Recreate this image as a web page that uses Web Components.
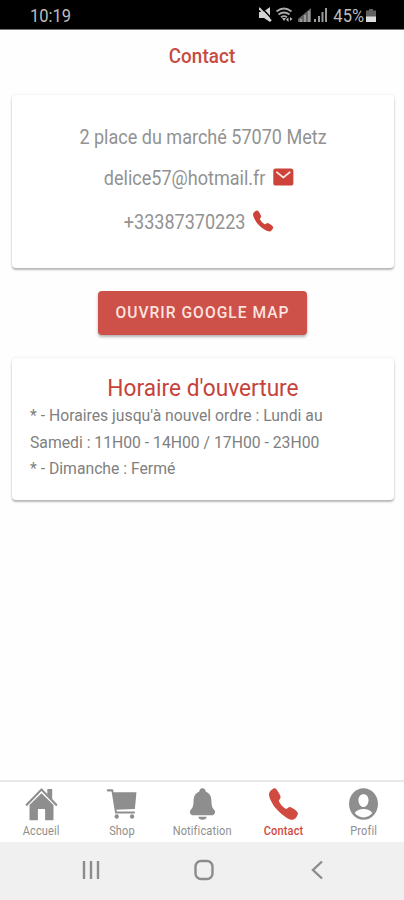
<!DOCTYPE html>
<html lang="fr">
<head>
<meta charset="utf-8">
<title>Contact</title>
<style>
    html, body {
        margin: 0;
        height: 100%;
        overflow: hidden;
        background: #fefefe;
    }
    body {
        font-family: Roboto, "Liberation Sans", sans-serif;
        color: #8e8e8e;
    }
</style>
</head>
<body>
<app-screen>
    <status-bar slot="top" time="10:19" battery="45%"></status-bar>
    <page-title slot="top">Contact</page-title>

    <info-card style="--height: 173px; --pad: 30px 18px 0">
        <contact-line>2 place du marché 57070 Metz</contact-line>
        <contact-line icon="mail" style="--gap-top: 16px">delice57@hotmail.fr</contact-line>
        <contact-line icon="call" style="--gap-top: 19px">+33387370223</contact-line>
    </info-card>

    <action-button>Ouvrir Google Map</action-button>

    <info-card style="--height: 142px; --pad: 16px 18px 0">
        <opening-hours heading="Horaire d'ouverture">
            <div>* - Horaires jusqu'à nouvel ordre : Lundi au</div>
            <div>Samedi : 11H00 - 14H00 / 17H00 - 23H00</div>
            <div>* - Dimanche : Fermé</div>
        </opening-hours>
    </info-card>

    <tab-bar slot="bottom">
        <tab-item icon="home">Accueil</tab-item>
        <tab-item icon="cart">Shop</tab-item>
        <tab-item icon="bell">Notification</tab-item>
        <tab-item icon="call" active>Contact</tab-item>
        <tab-item icon="person">Profil</tab-item>
    </tab-bar>
    <system-nav slot="bottom"></system-nav>
</app-screen>

<script>
    const icons = {
        mail: `<path fill="currentColor" d="M424 74H88a56 56 0 0 0-56 56v252a56 56 0 0 0 56 56h336a56 56 0 0 0 56-56V130a56 56 0 0 0-56-56z"/><path d="M112 156l144 112 144-112" fill="none" stroke="#fff" stroke-opacity=".85" stroke-width="38" stroke-linecap="round" stroke-linejoin="round"/>`,
        call: `<path fill="currentColor" d="M391 480c-19.52 0-46.94-7.06-88-30-49.93-28-88.55-53.85-138.21-103.38C116.91 298.77 93.61 267.79 61 208.45c-36.84-67-30.56-102.12-23.54-117.13C45.82 73.38 58.16 62.65 74.11 52a176.3 176.3 0 0128.64-15.2c1-.43 1.93-.84 2.76-1.21 4.95-2.23 12.45-5.6 21.95-2 6.34 2.38 12 7.25 20.86 16 18.17 17.92 43 57.83 52.16 77.43 6.15 13.21 10.22 21.93 10.23 31.71 0 11.45-5.76 20.28-12.75 29.81-1.31 1.79-2.61 3.5-3.87 5.16-7.61 10-9.28 12.89-8.18 18.05 2.23 10.37 18.86 41.24 46.19 68.51s57.31 42.85 67.72 45.07c5.38 1.15 8.33-.59 18.65-8.47 1.48-1.13 3-2.3 4.59-3.47 10.66-7.93 19.08-13.54 30.26-13.54h.06c9.73 0 18.06 4.22 31.86 11.18 18 9.08 59.11 33.59 77.14 51.78 8.77 8.84 13.66 14.48 16.05 20.8 3.6 9.53.21 17-2 22-.37.83-.78 1.74-1.21 2.75a176.49 176.49 0 01-15.29 28.58c-10.63 15.9-21.4 28.21-39.38 36.58A67.42 67.42 0 01391 480z"/>`,
        home: `<path fill="currentColor" d="M256 102L70 270v206a12 12 0 0 0 12 12h118V338a12 12 0 0 1 12-12h88a12 12 0 0 1 12 12v150h118a12 12 0 0 0 12-12V270z"/><path d="M26 268L256 50l230 218" fill="none" stroke="currentColor" stroke-width="31" stroke-linecap="round" stroke-linejoin="round"/><path fill="currentColor" d="M346 44h76v154l-76-72z"/>`,
        cart: `<g fill="currentColor"><circle cx="182" cy="434" r="33"/><circle cx="420" cy="434" r="33"/><path d="M118 88h370l-24 238-306 10z"/></g><path d="M42 62h72l56 316h282" fill="none" stroke="currentColor" stroke-width="29" stroke-linecap="round" stroke-linejoin="round"/>`,
        bell: `<path fill="currentColor" d="M440 341c-20-24-45-43-45-125 0-75-38-119-87-133-5-27-18-51-52-51s-47 24-52 51c-49 14-87 58-87 133 0 82-25 101-45 125-25 31-3 75 40 75h288c43 0 65-44 40-75zM190 438a67 51 0 0 0 132 0z"/>`,
        person: `<path fill="currentColor" fill-rule="evenodd" d="M256 32a224 224 0 1 0 0 448 224 224 0 1 0 0-448zM256 119c49 0 80 38 78 87-2 51-37 93-78 93s-76-42-78-93c-2-50 29-87 78-87zM256 447c-52 0-102-23-137-62 25-36 81-57 137-57s112 21 137 57c-35 39-85 62-137 62z"/>`
    };

    const icon = (name) => `<svg viewBox="0 0 512 512" preserveAspectRatio="none">${icons[name]}</svg>`;

    class BaseElement extends HTMLElement {
        constructor() {
            super();
            this.attachShadow({ mode: "open" });
        }

        connectedCallback() {
            this.shadowRoot.innerHTML = this.render();
        }
    }

    class AppScreen extends BaseElement {
        render() {
            return `
                <style>
                    :host {
                        display: flex;
                        flex-direction: column;
                        height: 100vh;
                        --condense: scaleX(0.918);
                    }
                    main {
                        flex: 1;
                        display: flex;
                        flex-direction: column;
                        padding: 14px 10px 0 12px;
                        gap: 23px;
                    }
                </style>
                <slot name="top"></slot>
                <main><slot></slot></main>
                <slot name="bottom"></slot>
            `;
        }
    }

    class StatusBar extends BaseElement {
        render() {
            return `
                <style>
                    :host {
                        display: flex;
                        align-items: center;
                        justify-content: space-between;
                        box-sizing: border-box;
                        height: 30px;
                        padding: 1px 28px 0 30px;
                        background: #000;
                        border-bottom: 1px solid #777;
                        color: #bdbdbd;
                        font-size: 18px;
                    }
                    span { transform: var(--condense); }
                    .time { transform-origin: 0 50%; }
                    .right { display: flex; align-items: center; }
                    svg { display: block; }
                    .battery { margin: 1px 0 0 1px; }
                </style>
                <span class="time">${this.getAttribute("time")}</span>
                <div class="right">
                    <svg width="73" height="18" viewBox="0 0 73 18">
                        <path fill="#d5d5d5" d="M0 6h4L11 1v15L5 12H0z"/>
                        <path d="M2 1l12 13" stroke="#000" stroke-width="1.500"/>
                        <path d="M0 2l12 13" stroke="#d5d5d5" stroke-width="2"/>
                        <g fill="none" stroke="#a9a9a9" stroke-width="1.800">
                            <path d="M17.500 5.500q7.500-6 15 0"/>
                            <path d="M19.500 8.500q5.500-4 11 0"/>
                            <path d="M22 11.200q3-2 6 0"/>
                        </g>
                        <path fill="#b9b9b9" d="M23 12h4l-2 3zM27 13.500l2.500-2v4.500zM31 11l2.500 2L31 15z"/>
                        <path fill="#666" d="M39 16v-3L52 2v14z"/>
                        <g fill="#999">
                            <path d="M41 13h2v3h-2zM45 9h2v7h-2zM49 5h2v11h-2z"/>
                            <path d="M55 13h2v3h-2zM59 10h2v6h-2zM62.500 6h2v10h-2zM66 2h2v14h-2z"/>
                        </g>
                    </svg>
                    <span>${this.getAttribute("battery")}</span>
                    <svg class="battery" width="10" height="14" viewBox="0 0 10 14">
                        <path fill="#606060" d="M3 0h4v1.500h3V8H0V1.500h3z"/>
                        <path fill="#ddd" d="M0 7.500h10V13H0z"/>
                    </svg>
                </div>
            `;
        }
    }

    class PageTitle extends BaseElement {
        render() {
            return `
                <style>
                    :host {
                        display: flex;
                        align-items: center;
                        justify-content: center;
                        height: 51px;
                        color: #c64b43;
                        font-size: 20.500px;
                        font-weight: 500;
                        letter-spacing: 0.1px;
                        transform: var(--condense);
                    }
                </style>
                <slot></slot>
            `;
        }
    }

    class InfoCard extends BaseElement {
        render() {
            return `
                <style>
                    :host {
                        display: block;
                        box-sizing: border-box;
                        height: var(--height);
                        padding: var(--pad);
                        background: #fff;
                        border-radius: 4px;
                        box-shadow: 0 2px 2px rgba(0, 0, 0, 0.26), 0 0 3px rgba(0, 0, 0, 0.1);
                    }
                </style>
                <slot></slot>
            `;
        }
    }

    class ContactLine extends BaseElement {
        render() {
            const name = this.getAttribute("icon");
            return `
                <style>
                    :host {
                        display: flex;
                        align-items: center;
                        justify-content: center;
                        gap: 7px;
                        height: 25px;
                        margin-top: var(--gap-top, 0);
                        color: #929292;
                        font-size: 19.650px;
                        transform: var(--condense);
                    }
                    svg {
                        width: 25px;
                        height: 24px;
                        margin: -3px 8px 0 0;
                        color: #cd4339;
                    }
                </style>
                <slot></slot>${name ? icon(name) : ""}
            `;
        }
    }

    class ActionButton extends BaseElement {
        render() {
            return `
                <style>
                    :host { display: flex; justify-content: center; padding-right: 1px; }
                    button {
                        width: 209px;
                        height: 44px;
                        padding: 0 0 2px;
                        border: 0;
                        border-radius: 4px;
                        background: #cd5049;
                        box-shadow: 0 2px 3px rgba(0, 0, 0, 0.3);
                        color: #fbe3df;
                        font: 500 17px Roboto, "Liberation Sans", sans-serif;
                        letter-spacing: 1.1px;
                        text-transform: uppercase;
                        white-space: nowrap;
                    }
                    span { display: block; transform: var(--condense); }
                </style>
                <button type="button"><span><slot></slot></span></button>
            `;
        }
    }

    class OpeningHours extends BaseElement {
        render() {
            return `
                <style>
                    :host {
                        display: block;
                        color: #808080;
                        font-size: 17.150px;
                        line-height: 26.500px;
                        white-space: nowrap;
                    }
                    h2 {
                        margin: 0;
                        color: #c6423b;
                        font-size: 24.700px;
                        font-weight: 400;
                        line-height: 28px;
                        text-align: center;
                        transform: var(--condense);
                    }
                    .lines {
                        transform: var(--condense);
                        transform-origin: 0 0;
                    }
                </style>
                <h2>${this.getAttribute("heading")}</h2>
                <div class="lines"><slot></slot></div>
            `;
        }
    }

    class TabBar extends BaseElement {
        render() {
            return `
                <style>
                    :host {
                        display: grid;
                        grid-template-columns: repeat(5, 1fr);
                        box-sizing: border-box;
                        height: 62px;
                        padding-left: 1px;
                        border-top: 2px solid #e8e8e8;
                        background: #fff;
                    }
                </style>
                <slot></slot>
            `;
        }
    }

    class TabItem extends BaseElement {
        render() {
            return `
                <style>
                    :host {
                        display: flex;
                        flex-direction: column;
                        align-items: center;
                        padding-top: 4px;
                        color: #8e8e8e;
                        font-size: 12px;
                        letter-spacing: 0.15px;
                        line-height: 14px;
                    }
                    :host([active]) { color: #d04a40; font-weight: 500; }
                    svg { width: 33px; height: 36px; margin-bottom: 2px; }
                    span { transform: var(--condense); }
                </style>
                ${icon(this.getAttribute("icon"))}
                <span><slot></slot></span>
            `;
        }
    }

    class SystemNav extends BaseElement {
        render() {
            return `
                <style>
                    :host {
                        display: flex;
                        align-items: center;
                        justify-content: center;
                        gap: 89px;
                        box-sizing: border-box;
                        height: 58px;
                        padding: 0 0 3px 4px;
                        background: #f0f0f0;
                    }
                    svg {
                        width: 24px;
                        height: 24px;
                        fill: none;
                        stroke: #8c8c8c;
                        stroke-width: 2.4;
                    }
                </style>
                <svg viewBox="0 0 24 24"><path d="M5 3v18M12 3v18M19 3v18"/></svg>
                <svg viewBox="0 0 24 24"><rect x="3.500" y="3" width="17" height="18" rx="5.500"/></svg>
                <svg viewBox="0 0 24 24"><path d="M17 3.500l-9 8.500 9 8.500"/></svg>
            `;
        }
    }

    customElements.define("app-screen", AppScreen);
    customElements.define("status-bar", StatusBar);
    customElements.define("page-title", PageTitle);
    customElements.define("info-card", InfoCard);
    customElements.define("contact-line", ContactLine);
    customElements.define("action-button", ActionButton);
    customElements.define("opening-hours", OpeningHours);
    customElements.define("tab-bar", TabBar);
    customElements.define("tab-item", TabItem);
    customElements.define("system-nav", SystemNav);
</script>
</body>
</html>
